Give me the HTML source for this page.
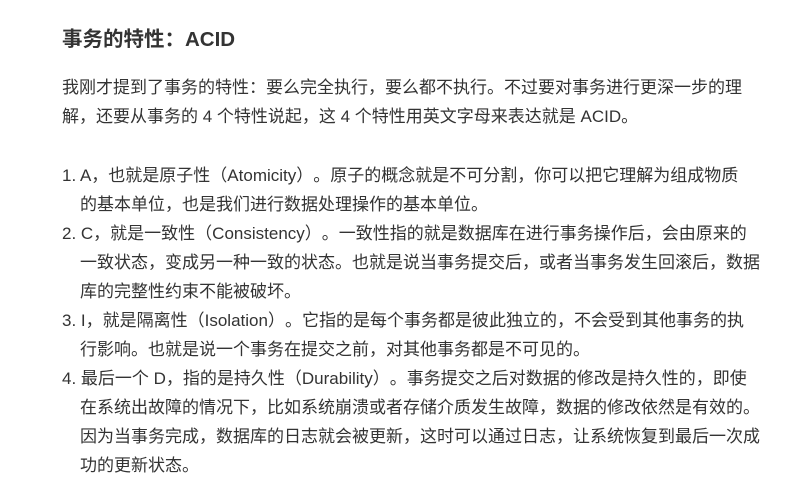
<!DOCTYPE html>
<html><head><meta charset="utf-8"><style>
body{margin:0;background:#fff;color:#333;font-family:"Liberation Sans","Noto Sans CJK SC",sans-serif;font-size:17px;text-spacing-trim:space-all;}
h2{position:absolute;left:62px;top:27px;margin:0;font-size:20.5px;font-weight:bold;line-height:26px;white-space:nowrap;color:#333}
.l{position:absolute;white-space:nowrap;line-height:22px;}
</style></head><body>
<h2>事务的特性：ACID</h2>
<div class="l" style="left:62px;top:77px">我刚才提到了事务的特性：要么完全执行，要么都不执行。不过要对事务进行更深一步的理</div>
<div class="l" style="left:62px;top:106px">解，还要从事务的 4 个特性说起，这 4 个特性用英文字母来表达就是 ACID。</div>
<div class="l" style="left:62px;top:165px">1. A，也就是原子性（Atomicity）。原子的概念就是不可分割，你可以把它理解为组成物质</div>
<div class="l" style="left:80px;top:194px">的基本单位，也是我们进行数据处理操作的基本单位。</div>
<div class="l" style="left:62px;top:223px">2. C，就是一致性（Consistency）。一致性指的就是数据库在进行事务操作后，会由原来的</div>
<div class="l" style="left:80px;top:252px">一致状态，变成另一种一致的状态。也就是说当事务提交后，或者当事务发生回滚后，数据</div>
<div class="l" style="left:80px;top:281px">库的完整性约束不能被破坏。</div>
<div class="l" style="left:62px;top:310px">3. I，就是隔离性（Isolation）。它指的是每个事务都是彼此独立的，不会受到其他事务的执</div>
<div class="l" style="left:80px;top:339px">行影响。也就是说一个事务在提交之前，对其他事务都是不可见的。</div>
<div class="l" style="left:62px;top:368px">4. 最后一个 D，指的是持久性（Durability）。事务提交之后对数据的修改是持久性的，即使</div>
<div class="l" style="left:80px;top:397px">在系统出故障的情况下，比如系统崩溃或者存储介质发生故障，数据的修改依然是有效的。</div>
<div class="l" style="left:80px;top:426px">因为当事务完成，数据库的日志就会被更新，这时可以通过日志，让系统恢复到最后一次成</div>
<div class="l" style="left:80px;top:455px">功的更新状态。</div>
</body></html>
